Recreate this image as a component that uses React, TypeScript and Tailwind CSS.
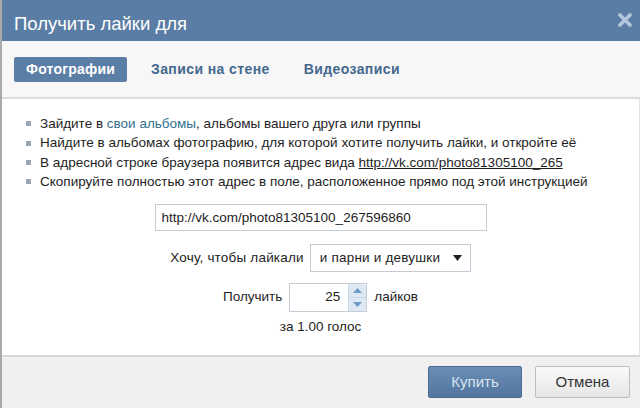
import { useState } from "react";

const font = { fontFamily: '"Liberation Sans", Arial, sans-serif' };

function Bullet({ children }: { children: React.ReactNode }) {
  return (
    <li className="flex items-center gap-[9px]">
      <span className="w-[5px] h-[5px] bg-[#97a5b5] shrink-0" />
      <span>{children}</span>
    </li>
  );
}

export default function App() {
  const [tab, setTab] = useState("photos");
  const tabs = [
    { id: "photos", label: "Фотографии" },
    { id: "wall", label: "Записи на стене" },
    { id: "video", label: "Видеозаписи" },
  ];

  return (
    <div
      className="w-[640px] h-[408px] overflow-hidden flex flex-col border-l-2 border-[#a9a9a9] text-[#1e1e1e]"
      style={font}
    >
      <div className="h-[41px] shrink-0 bg-[#5a7da5] flex items-center justify-between pl-[12px] pr-[8px]">
        <span className="text-white text-[18.5px] mt-[6px]">Получить лайки для</span>
        <svg width="14" height="14" viewBox="0 0 14 14" className="-mt-[2px]">
          <path d="M2 2 L12 12 M12 2 L2 12" stroke="#b3c7dd" strokeWidth="3.6" strokeLinecap="round" />
        </svg>
      </div>

      <div className="h-[58px] shrink-0 bg-[#f7f7f7] border-b-2 border-[#dcdcdc] flex items-center gap-[14px] pl-[12px]">
        {tabs.map((t) => (
          <button
            key={t.id}
            onClick={() => setTab(t.id)}
            className={
              tab === t.id
                ? "h-[25px] px-[12px] rounded-[2px] bg-[#5b7ea7] text-white text-[14px] font-bold tracking-[0.2px]"
                : "h-[25px] px-[10px] text-[#45688e] text-[14px] font-bold tracking-[0.4px]"
            }
          >
            {t.label}
          </button>
        ))}
      </div>

      <div className="flex-1 bg-white border-r border-[#e2e2e2] pt-[15px] flex flex-col items-center text-[13.5px]">
        <ul className="self-start pl-[24px] leading-[19.4px]">
          <Bullet>
            Зайдите в <span className="text-[#336f8e]">свои альбомы</span>, альбомы вашего друга или группы
          </Bullet>
          <Bullet>Найдите в альбомах фотографию, для которой хотите получить лайки, и откройте её</Bullet>
          <Bullet>
            В адресной строке браузера появится адрес вида{" "}
            <span className="underline">http://vk.com/photo81305100_265</span>
          </Bullet>
          <Bullet>Скопируйте полностью этот адрес в поле, расположенное прямо под этой инструкцией</Bullet>
        </ul>

        <input
          defaultValue="http://vk.com/photo81305100_267596860"
          className="mt-[12px] w-[332px] h-[27px] border border-[#c5ccd4] px-[6px] text-[13.5px] outline-none"
          style={font}
        />

        <div className="mt-[13px] flex items-center gap-[6px]">
          <span className="tracking-[0.2px]">Хочу, чтобы лайкали</span>
          <div className="w-[161px] h-[28px] border border-[#c5ccd4] flex items-center justify-between pl-[9px] pr-[8px]">
            <span className="tracking-[0.2px]">и парни и девушки</span>
            <svg width="9" height="6" viewBox="0 0 9 6">
              <path d="M0 0 H9 L4.5 6 Z" fill="#222" />
            </svg>
          </div>
        </div>

        <div className="mt-[11px] flex items-center gap-[7px]">
          <span>Получить</span>
          <div className="w-[78px] h-[29px] border border-[#c5ccd4] flex">
            <span className="flex-1 text-right pr-[8px] self-center">25</span>
            <div className="w-[18px] flex flex-col bg-[#dde8f2] border-l border-[#c9d7e6] rounded-r-[3px]">
              <div className="flex-1 flex items-center justify-center border-b border-[#c9d7e6]">
                <svg width="9" height="5" viewBox="0 0 9 5">
                  <path d="M0 5 H9 L4.5 0 Z" fill="#6d9cc9" />
                </svg>
              </div>
              <div className="flex-1 flex items-center justify-center">
                <svg width="9" height="5" viewBox="0 0 9 5">
                  <path d="M0 0 H9 L4.5 5 Z" fill="#6d9cc9" />
                </svg>
              </div>
            </div>
          </div>
          <span>лайков</span>
        </div>

        <div className="mt-[5px]">за 1.00 голос</div>
      </div>

      <div className="h-[53px] shrink-0 bg-[#f0f0f0] border-t-2 border-[#d8d8d8] flex items-start justify-end gap-[13px] pt-[9px] pr-[10px]">
        <button className="w-[94px] h-[32px] rounded-[2px] bg-gradient-to-b from-[#6a8db5] to-[#52769f] border border-[#4a6b92] text-[#d9e4f0] text-[15px]">
          Купить
        </button>
        <button className="w-[95px] h-[32px] rounded-[2px] bg-gradient-to-b from-[#fafafa] to-[#e6e6e6] border border-[#bdbdbd] text-[#333] text-[15px]">
          Отмена
        </button>
      </div>
    </div>
  );
}
